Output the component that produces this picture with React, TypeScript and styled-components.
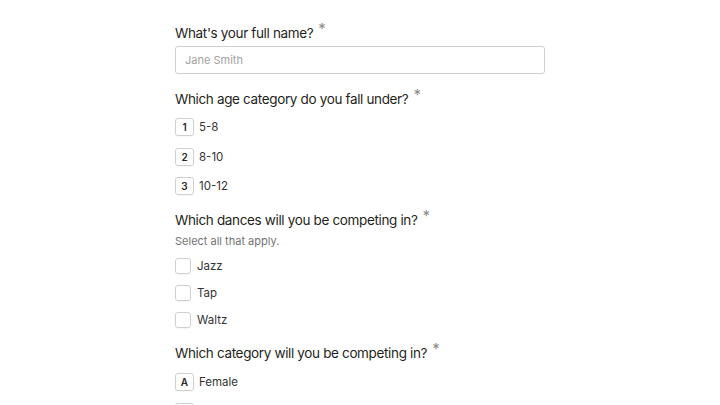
import styled, { createGlobalStyle } from 'styled-components';

const GlobalStyle = createGlobalStyle`
  html, body {
    margin: 0;
    padding: 0;
    background: #ffffff;
  }
  body {
    font-family: Inter, 'Noto Sans', 'Liberation Sans', sans-serif;
    color: #262627;
  }
`;

type Choice = { key: string; label: string };

const ageOptions: Choice[] = [
  { key: '1', label: '5-8' },
  { key: '2', label: '8-10' },
  { key: '3', label: '10-12' },
];

const dances = ['Jazz', 'Tap', 'Waltz'];

const categories: Choice[] = [
  { key: 'A', label: 'Female' },
  { key: 'B', label: 'Male' },
];

const App = () => {
  return (
    <>
      <GlobalStyle />
      <Form>
        <Question>
          <Title>
            What's your full name?<Required>*</Required>
          </Title>
          <TextInput placeholder="Jane Smith" />
        </Question>

        <Question>
          <Title>
            Which age category do you fall under?<Required>*</Required>
          </Title>
          <Options>
            {ageOptions.map((o) => (
              <Option key={o.key}>
                <KeyBadge>{o.key}</KeyBadge>
                <OptionLabel>{o.label}</OptionLabel>
              </Option>
            ))}
          </Options>
        </Question>

        <Question>
          <Title>
            Which dances will you be competing in?<Required>*</Required>
          </Title>
          <Hint>Select all that apply.</Hint>
          <Options $gap={11} $top={9} $labelGap={6}>
            {dances.map((d) => (
              <Option key={d}>
                <CheckBox />
                <OptionLabel>{d}</OptionLabel>
              </Option>
            ))}
          </Options>
        </Question>

        <Question>
          <Title>
            Which category will you be competing in?<Required>*</Required>
          </Title>
          <Options $top={10}>
            {categories.map((o) => (
              <Option key={o.key}>
                <KeyBadge>{o.key}</KeyBadge>
                <OptionLabel>{o.label}</OptionLabel>
              </Option>
            ))}
          </Options>
        </Question>
      </Form>
    </>
  );
};

const Form = styled.main`
  width: 370px;
  margin: 0 auto;
  padding-top: 23px;
  display: flex;
  flex-direction: column;
  gap: 15px;
`;

const Question = styled.section`
  display: flex;
  flex-direction: column;
`;

const Title = styled.h3`
  margin: 0;
  font-size: 13.5px;
  line-height: 20px;
  font-weight: 400;
  letter-spacing: -0.35px;
  color: #1f1f20;
`;

const Required = styled.span`
  margin-left: 5px;
  color: #8a8a8a;
  font-size: 15px;
  font-weight: 400;
  line-height: 0;
  vertical-align: 4px;
`;

const TextInput = styled.input`
  box-sizing: border-box;
  margin-top: 3px;
  width: 100%;
  height: 28px;
  padding: 0 9px;
  border: 1px solid #cfcfcf;
  border-radius: 3px;
  font-family: inherit;
  font-size: 11px;
  color: #262627;
  outline: none;
  &::placeholder {
    color: #a3a3a3;
  }
`;

const Hint = styled.p`
  margin: 3px 0 0;
  font-size: 11px;
  line-height: 16px;
  color: #737373;
`;

const Options = styled.div<{ $gap?: number; $top?: number; $labelGap?: number }>`
  display: flex;
  flex-direction: column;
  gap: ${(p) => p.$gap ?? 11.5}px;
  margin-top: ${(p) => p.$top ?? 9}px;
  --label-gap: ${(p) => p.$labelGap ?? 5}px;
`;

const Option = styled.div`
  display: flex;
  align-items: center;
  gap: var(--label-gap);
`;

const KeyBadge = styled.span`
  box-sizing: border-box;
  width: 19px;
  height: 18px;
  display: flex;
  align-items: center;
  justify-content: center;
  border: 1px solid #cfcfcf;
  border-radius: 3px;
  font-size: 10px;
  font-weight: 600;
  color: #262627;
  box-shadow: 0 1px 1px rgba(0, 0, 0, 0.04);
`;

const CheckBox = styled.span`
  box-sizing: border-box;
  width: 16px;
  height: 16px;
  border: 1px solid #cfcfcf;
  border-radius: 3px;
  box-shadow: 0 1px 1px rgba(0, 0, 0, 0.04);
`;

const OptionLabel = styled.span`
  font-size: 11.5px;
  line-height: 16px;
  color: #333333;
`;

export default App;
